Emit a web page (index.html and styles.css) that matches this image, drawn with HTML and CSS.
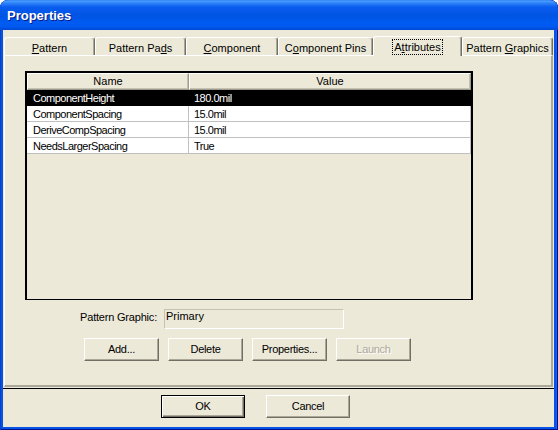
FILE: index.html
```html
<!DOCTYPE html>
<html lang="en">

<head>
    <meta charset="UTF-8">
    <title>Properties</title>
    <link rel="stylesheet" href="styles.css">
</head>

<body>
    <div class="window">
        <!-- title bar -->
        <div class="titlebar">Properties</div>

        <div class="client">
            <!-- tab strip -->
            <div class="tabs">
                <div class="tab w91"><u>P</u>attern</div>
                <div class="tab w91">Pattern Pa<u>d</u>s</div>
                <div class="tab w92"><u>C</u>omponent</div>
                <div class="tab w95">C<u>o</u>mponent Pins</div>
                <div class="tab w89 active"><span class="focus">A<u>t</u>tributes</span></div>
                <div class="tab w91">Pattern <u>G</u>raphics</div>
            </div>

            <div class="panel">
                <!-- attribute list -->
                <div class="listview">
                    <div class="lv-head">
                        <div class="hcell">Name</div>
                        <div class="hcell">Value</div>
                    </div>
                    <div class="lv-row selected">
                        <div class="cell name">ComponentHeight</div>
                        <div class="cell value">180.0mil</div>
                    </div>
                    <div class="lv-row">
                        <div class="cell name">ComponentSpacing</div>
                        <div class="cell value">15.0mil</div>
                    </div>
                    <div class="lv-row">
                        <div class="cell name">DeriveCompSpacing</div>
                        <div class="cell value">15.0mil</div>
                    </div>
                    <div class="lv-row">
                        <div class="cell name">NeedsLargerSpacing</div>
                        <div class="cell value">True</div>
                    </div>
                </div>

                <div class="field-row">
                    <div class="field-label">Pattern Graphic:</div>
                    <div class="textbox">Primary</div>
                </div>

                <div class="btn-row">
                    <div class="btn">Add...</div>
                    <div class="btn">Delete</div>
                    <div class="btn">Properties...</div>
                    <div class="btn disabled">Launch</div>
                </div>
            </div>

            <div class="separator"></div>

            <!-- dialog buttons -->
            <div class="footer">
                <div class="btn wide default">OK</div>
                <div class="btn wide">Cancel</div>
            </div>
        </div>
    </div>
</body>

</html>
```

FILE: styles.css
```css
/* page */
body {
    margin: 0;
    background: #fff;
    font-family: "Liberation Sans", Arial, sans-serif;
    font-size: 11px;
    color: #000;
}

/* window frame */
.window {
    width: 558px;
    height: 430px;
    box-sizing: border-box;
    display: flex;
    flex-direction: column;
    background: #0553e4;
    border-radius: 8px 8px 0 0;
    padding: 0 4px 3px 3px;
    box-shadow: inset 1px 0 #0a3fc8, inset -1px 0 #00138c, inset 0 -1px #00138c, inset -2px 0 #1a5fe8;
    overflow: hidden;
}

.titlebar {
    height: 28px;
    line-height: 28px;
    padding: 2px 0 0 7px;
    margin: 0 -4px 0 -3px;
    color: #fff;
    font-size: 13px;
    font-weight: bold;
    text-shadow: 1px 1px #0a1c8a;
    border-radius: 8px 8px 0 0;
    background: linear-gradient(to bottom, #2a7bf4 0, #4b9dff 1px, #2f84f9 3px, #0a5cef 7px, #0054e3 16px, #005cf4 23px, #0058ee 27px, #0047d2 30px);
}

.client {
    flex: 1;
    background: #ece9d8;
    display: flex;
    flex-direction: column;
}

/* tabs */
.tabs {
    display: flex;
    align-items: flex-end;
    height: 19px;
    margin: 6px 1px 0 1px;
}

.tab {
    box-sizing: border-box;
    height: 18px;
    padding-top: 4px;
    line-height: 13px;
    text-align: center;
    white-space: nowrap;
    background: #ece9d8;
    border-top: 1px solid #fff;
    border-left: 1px solid #fff;
    border-right: 1px solid #716f64;
    box-shadow: inset -1px 0 #aca899;
    border-radius: 3px 3px 0 0;
}

.tab.active {
    height: 20px;
    padding-top: 2px;
    margin-bottom: -1px;
    position: relative;
    z-index: 1;
}

.w89 { width: 89px; }
.w91 { width: 91px; }
.w92 { width: 92px; }
.w95 { width: 95px; }

.focus {
    display: block;
    width: fit-content;
    margin: 0 auto;
    padding: 1px 1px 0;
    border: 1px dotted #000;
    line-height: 13px;
}

/* tab page */
.panel {
    height: 332px;
    box-sizing: border-box;
    margin: 0 1px;
    padding: 15px 0 0 20px;
    border-top: 1px solid #fff;
    border-left: 1px solid #fff;
    border-right: 2px solid #aca899;
    border-bottom: 2px solid #aca899;
}

/* list view */
.listview {
    width: 448px;
    height: 229px;
    box-sizing: border-box;
    border: 2px solid #000;
    border-bottom-width: 1px;
    background: #ece9d8;
}

.lv-head,
.lv-row {
    display: grid;
    grid-template-columns: 162px 282px;
}

.hcell {
    height: 17px;
    box-sizing: border-box;
    line-height: 15px;
    text-align: center;
    border-top: 1px solid #fff;
    border-left: 1px solid #fff;
    border-right: 1px solid #9d9b8e;
    border-bottom: 1px solid #9d9b8e;
    box-shadow: inset -1px -1px #c4c1b2;
}

.cell {
    height: 16px;
    box-sizing: border-box;
    padding: 2px 0 0 6px;
    line-height: 13px;
    letter-spacing: -0.5px;
    white-space: nowrap;
    background: #fff;
    border-right: 1px solid #c0c0c0;
    border-bottom: 1px solid #c0c0c0;
}

.cell.value {
    padding-left: 5px;
}

.lv-row.selected .cell {
    background: #000;
    color: #fff;
    border-color: #000;
}

/* pattern graphic field */
.field-row {
    display: flex;
    gap: 7px;
    margin: 9px 0 0 51px;
}

.field-label {
    width: 81px;
    margin-top: 2px;
    line-height: 13px;
    text-align: right;
    letter-spacing: -0.2px;
    white-space: nowrap;
}

.textbox {
    width: 180px;
    height: 20px;
    box-sizing: border-box;
    padding-left: 1px;
    line-height: 13px;
    border: 1px solid #c5c2b2;
    border-right-color: #fff;
    border-bottom-color: #fff;
}

/* buttons */
.btn-row {
    display: flex;
    gap: 9px;
    margin: 9px 0 0 59px;
}

.btn {
    width: 75px;
    height: 23px;
    box-sizing: border-box;
    line-height: 21px;
    text-align: center;
    letter-spacing: -0.3px;
    background: #ece9d8;
    border-top: 1px solid #fff;
    border-left: 1px solid #fff;
    border-right: 1px solid #716f64;
    border-bottom: 1px solid #716f64;
    box-shadow: inset -1px -1px #aca899;
}

.btn.disabled {
    color: #aca899;
    text-shadow: 1px 1px #fff;
}

.btn.wide {
    width: 84px;
}

.btn.default {
    border: 1px solid #000;
    box-shadow: inset 1px 1px #fff, inset -1px -1px #716f64, inset -2px -2px #aca899;
}

.separator {
    height: 1px;
    margin-top: 1px;
    background: #000;
}

.footer {
    flex: 1;
    display: flex;
    gap: 21px;
    padding: 6px 0 0 158px;
}
```
